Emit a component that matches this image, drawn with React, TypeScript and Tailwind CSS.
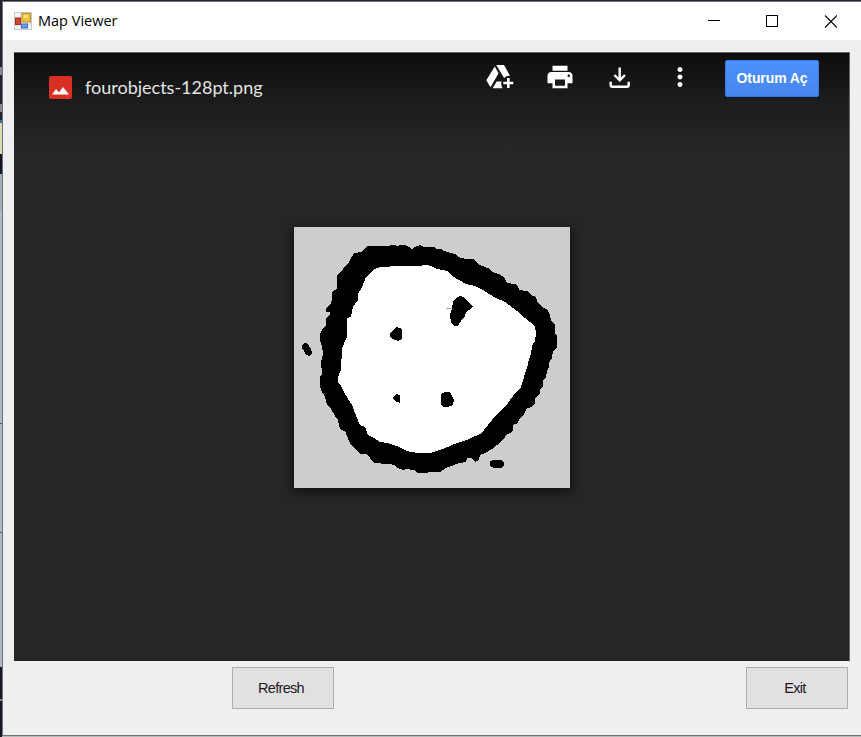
import React from "react";
import { MdPrint, MdMoreVert } from "react-icons/md";

const OUTER =
  "354,253 362,252 367,246 388,246.5 391,245 395,245 397,246.5 400,245 405,245 408,246.5 412,249 415,247 420,245 423,246.5 433,246.5 436,248.5 441,248.5 444,251 450,253 455,254 458,257 466,259 473,259 478,264 487,268 490,269 492,272 499,274 504,277 507,283 515,284 518,286 519,290 527,291 531,295 536,297 538,303 543,308 547,309 550,315 551,321 555,324 555,333 557,336 557,348 553,351 552,358 549,363 549,367 547,371 546,377 543,381 543,386 540,389 540,394 535,398 535,403 532,407 527,408 524,414 519,419 518,423 513,425 513,430 511,433 507,434 503,440 497,445 492,449 485,453 480,455 479,460 475,462 471,458 467,458 466,462 459,463 454,465 448,467 443,470 440,472 429,472 427,473 417,473 414,470 406,469 403,470 397,468 395,465 388,464 374,463 370,458 366,454 360,454 354,448 350,443 347,436 345,431 341,430 339,426 338,420 335,416 331,409 327,405 325,397 321,390 320,385 320,377 322,374 321,362 323,354 322,346 320,341 320,334 323,328 326,325 326,318 330,315 330,312 326,312 326,308 330,305 332,300 332,292 337,289 337,275 342,271 345,266 349,262";
const INNER =
  "373,270 380,267 390,266.5 420,266 426,264.5 431,266 437,269 448,271 452,276 459,280 466,284 475,286 483,290 494,297 505,302 517,311 525,318 535,326 536,334 535,341 532,346 531,354 529,359 527,368 524,377 521,387 513,396 508,403 500,411 492,420 484,430 480,434 469,439 457,443 445,448 430,453 425,453.5 410,452 403,449 397,446 387,443 380,442 374,438 368,435 365,427 360,425 357,418 352,405 345,394 341,386 338,383 338,377 341,370 342,348 347,337 347,318 351,317 353,307 358,300 358,294 362,287 366,277";

function MapDrawing() {
  return (
    <svg
      viewBox="294 227 276 261"
      shapeRendering="crispEdges"
      className="h-[261px] w-[276px] bg-[#cdcdcd] shadow-[0_3px_9px_2px_rgba(0,0,0,0.5)]"
    >
      <polygon points={OUTER} fill="#000" />
      <polygon points={INNER} fill="#fff" />
      <path d="M446 308.500h6" stroke="#aaa" />
      <polygon points="456,298 460,296 463,297 468,302 473,306 471,309 466,312 465,316 461,321 458,326 454,326 451,323 450,314 452,309 453,302" />
      <polygon points="390,333 394,329 396,327 402,329 402,339 398,341 392,339 390,336" />
      <polygon points="393,398 396,394 400,395 400,403 397,402 394,400" />
      <polygon points="441,394 445,392 450,392 452,396 454,400 453,405 448,407 443,407 441,405" />
      <polygon points="302,345 305,343 308,344 311,349 312,353 309,356 306,355 304,351 302,348" />
      <polygon points="490,461 493,460 501,460 504,462 504,466 501,468 494,468 490,466" />
    </svg>
  );
}

function FormIcon() {
  return (
    <svg viewBox="0 0 18 18" className="h-[18px] w-[18px]">
      <rect x="0.5" y="0.5" width="17" height="17" fill="#f1f2f6" stroke="#c5cbd6" />
      <path d="M7 1v16M1 12h16" stroke="#d3d7df" />
      <rect x="1.5" y="6" width="5" height="6.500" fill="#cf4a32" stroke="#a52a20" />
      <rect x="8" y="1.5" width="8.500" height="8.500" fill="#f0c13a" stroke="#b9902a" />
      <rect x="9.500" y="3" width="4.500" height="3" fill="#fbe27a" />
      <rect x="7.500" y="12" width="6" height="4" fill="#6c9be8" stroke="#3f6fc8" />
    </svg>
  );
}

function WindowControls() {
  return (
    <svg viewBox="0 0 130 14" className="mr-[24px] h-[14px] w-[130px]" stroke="#000" fill="none">
      <path d="M1 6.500h12" />
      <rect x="59.500" y="1.500" width="11" height="11" />
      <path d="M118 1.500l12 12M130 1.500l-12 12" strokeWidth="1.100" />
    </svg>
  );
}

function AddToDriveIcon() {
  return (
    <svg viewBox="0 0 30 30" className="h-[30px] w-[30px]" fill="currentColor">
      <path d="M9.800 4.600L13.600 11.300 5.500 25.200 1.300 18.300z" />
      <path d="M11.200 3H19l6 10.800a7.500 7.500 0 0 0-5.900 2.200z" />
      <path d="M11.600 19.400h4.900a8 8 0 0 0 1 6.800H7.700z" />
      <path d="M22 16h2.600v3.700h3.700v2.600h-3.700V26H22v-3.700h-3.700v-2.600H22z" />
    </svg>
  );
}

function DownloadIcon() {
  return (
    <svg
      viewBox="0 0 30 30"
      className="h-[30px] w-[30px]"
      fill="none"
      stroke="currentColor"
      strokeWidth="2.400"
    >
      <path d="M14.700 5.500v12.500M9.400 13l5.300 5.300 5.300-5.300" />
      <path d="M5.700 19.700v3.300q0 1.700 1.700 1.700h14.600q1.700 0 1.700-1.700v-3.300" />
    </svg>
  );
}

function DesktopEdge() {
  return (
    <div className="flex w-[2px] flex-col overflow-hidden bg-[#b4b9bb]">
      <div className="h-[66px] bg-[#24232d]" />
      <div className="h-[8px] bg-[#8a8990]" />
      <div className="h-[29px] bg-[#24232d]" />
      <div className="h-[8px] bg-[#8a8990]" />
      <div className="h-[8px] bg-[#24232d]" />
      <div className="h-[3px] bg-[#237b9c]" />
      <div className="h-[31px] bg-[#dcd8b0]" />
      <div className="h-[20px] bg-[#15151c]" />
      <div className="h-[37px] bg-[#a1afbd]" />
      <div className="h-[212px]" />
      <div className="h-[1px] bg-[#555b60]" />
      <div className="h-[108px]" />
      <div className="h-[1px] bg-[#555b60]" />
      <div className="h-[134px]" />
      <div className="h-[32px] bg-[#17171f]" />
      <div className="h-[2px] bg-[#8a8990]" />
      <div className="flex-1 bg-[#17171f]" />
    </div>
  );
}

function FormButton({ children }: { children: React.ReactNode }) {
  return (
    <button className="flex h-[42px] w-[102px] items-center justify-center border border-[#adadad] bg-[#e1e1e1] pr-[4px] pt-[2px] font-['Liberation_Sans',sans-serif] text-[14.500px] tracking-[-0.700px] text-[#1d1a25]">
      {children}
    </button>
  );
}

export default function App() {
  return (
    <div className="flex h-[737px] w-[861px] flex-col overflow-hidden bg-[#b4bcbc]">
      <div className="h-px shrink-0 bg-[#23232d]" />
      <div className="flex min-h-0 flex-1">
        <DesktopEdge />
        <div className="mb-px flex min-w-0 flex-1 flex-col border-b border-l border-t border-[#69737b] bg-[#efefef]">
          <header className="flex h-[38px] shrink-0 items-center bg-white pl-[11px]">
            <FormIcon />
            <h1 className="ml-[6px] flex-1 whitespace-nowrap font-['Open_Sans',sans-serif] text-[14.500px] text-black">
              Map Viewer
            </h1>
            <WindowControls />
          </header>
          <main className="ml-[11px] mt-[12px] flex h-[609px] w-[836px] shrink-0 flex-col border-r border-t border-[#666] bg-[#262626] bg-[linear-gradient(to_bottom,#0d0d0d_0px,#1c1c1c_48px,#262626_96px)]">
            <div className="flex h-[52px] shrink-0 items-start">
              <div className="ml-[35px] mt-[23px] flex h-[23px] w-[23px] items-end justify-center rounded-[2px] bg-[#d93025]">
                <svg viewBox="0 0 17 9" className="mb-[4px] h-[9px] w-[17px]" fill="#fff">
                  <path d="M0 8.500L4 3l3 3.500L11 1l6 7.500z" />
                </svg>
              </div>
              <div className="ml-[13px] mt-[22px] w-[387px] whitespace-nowrap font-['Lato',sans-serif] text-[18px] leading-[24px] text-[#e4e4e4]">
                fourobjects-128pt.png
              </div>
              <div className="ml-[13px] mt-[9px] flex gap-[30px] text-white">
                <AddToDriveIcon />
                <MdPrint size={30} />
                <DownloadIcon />
                <MdMoreVert size={30} />
              </div>
              <button className="ml-[30px] mt-[7px] flex h-[37px] w-[94px] items-center justify-center rounded-[2px] border border-[#3079ed] bg-[linear-gradient(to_bottom,#4d90fe,#4787ed)] font-['Liberation_Sans',sans-serif] text-[14px] font-bold tracking-[-0.100px] text-white">
                Oturum Aç
              </button>
            </div>
            <div className="flex justify-start pl-[280px] pt-[122px]">
              <MapDrawing />
            </div>
          </main>
          <footer className="ml-[229px] mr-[13px] mt-[6px] flex justify-between">
            <FormButton>Refresh</FormButton>
            <FormButton>Exit</FormButton>
          </footer>
        </div>
      </div>
    </div>
  );
}
